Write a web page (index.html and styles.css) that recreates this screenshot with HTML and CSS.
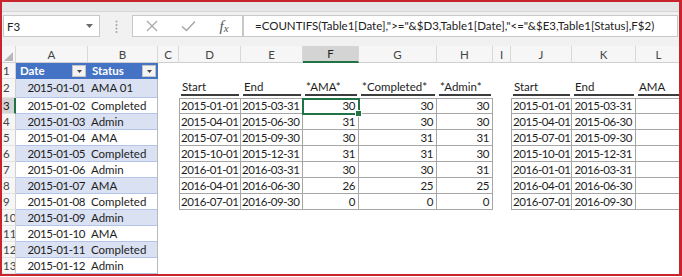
FILE: index.html
```html
<!DOCTYPE html>
<html lang="en">
<head>
    <meta charset="UTF-8">
    <meta name="viewport" content="width=device-width, initial-scale=1.0">
    <title>Countifs</title>
    <link rel="stylesheet" href="styles.css">
</head>
<body>
    <div class="window">
        <div class="ribbon"></div>
        <div class="formulaBar">
            <div class="nameBox">
                <span>F3</span>
                <svg width="7" height="4" viewBox="0 0 7 4"><polygon points="0,0 7,0 3.5,4" fill="#6b6b6b"/></svg>
            </div>
            <div class="grip">
                <svg width="3" height="14" viewBox="0 0 3 14">
                    <circle cx="1.5" cy="1.5" r="1" fill="#a3a3a3"/>
                    <circle cx="1.5" cy="5" r="1" fill="#a3a3a3"/>
                    <circle cx="1.5" cy="8.5" r="1" fill="#a3a3a3"/>
                    <circle cx="1.5" cy="12" r="1" fill="#a3a3a3"/>
                </svg>
            </div>
            <div class="fxBtns">
                <span class="fxBtn">
                    <svg width="12" height="12" viewBox="0 0 12 12"><path d="M1 1 L11 11 M11 1 L1 11" stroke="#a9a9a9" stroke-width="1.3" fill="none"/></svg>
                </span>
                <span class="fxBtn">
                    <svg width="15" height="12" viewBox="0 0 15 12"><path d="M1 6.5 L5.5 10.5 L14 1.5" stroke="#a9a9a9" stroke-width="1.6" fill="none"/></svg>
                </span>
                <span class="fxBtn fx">f<span class="fxSub">x</span></span>
            </div>
            <div class="formula">=COUNTIFS(Table1[Date],"&gt;="&amp;$D3,Table1[Date],"&lt;="&amp;$E3,Table1[Status],F$2)</div>
        </div>

        <table class="sheet">
            <colgroup>
                <col class="wRh"><col class="wA"><col class="wB"><col class="wC"><col class="wD"><col class="wE"><col class="wF">
                <col class="wG"><col class="wH"><col class="wI"><col class="wJ"><col class="wK"><col class="wL">
            </colgroup>
            <tr class="colHead">
                <th class="corner"><svg width="9" height="9" viewBox="0 0 9 9"><polygon points="9,0 9,9 0,9" fill="#b8b8b8"/></svg></th>
                <th>A</th><th>B</th><th>C</th><th>D</th><th>E</th><th class="active">F</th>
                <th>G</th><th>H</th><th>I</th><th>J</th><th>K</th><th>L</th>
            </tr>
            <tr class="rowOne">
                <td class="rh">1</td>
                <td class="tHead"><div class="hd">Date<span class="flt"><svg width="5" height="3" viewBox="0 0 5 3"><polygon points="0,0 5,0 2.5,3" fill="#444"/></svg></span></div></td>
                <td class="tHead"><div class="hd">Status<span class="flt"><svg width="5" height="3" viewBox="0 0 5 3"><polygon points="0,0 5,0 2.5,3" fill="#444"/></svg></span></div></td>
                <td colspan="10"></td>
            </tr>
            <tr class="rowTwo">
                <td class="rh">2</td>
                <td class="a band">2015-01-01</td><td class="b band">AMA 01</td>
                <td></td>
                <td class="h"><span>Start</span></td><td class="h"><span>End</span></td><td class="h"><span>*AMA*</span></td>
                <td class="h"><span>*Completed*</span></td><td class="h"><span>*Admin*</span></td>
                <td></td>
                <td class="h"><span>Start</span></td><td class="h"><span>End</span></td><td class="h"><span>AMA</span></td>
            </tr>
            <tr class="row">
                <td class="rh active">3</td>
                <td class="a">2015-01-02</td><td class="b">Completed</td>
                <td></td>
                <td class="n first top">2015-01-01</td><td class="n top">2015-03-31</td><td class="n top sel">30</td><td class="n top">30</td><td class="n top">30</td>
                <td></td>
                <td class="n first top">2015-01-01</td><td class="n top">2015-03-31</td><td class="n top"></td>
            </tr>
            <tr class="row">
                <td class="rh">4</td>
                <td class="a band">2015-01-03</td><td class="b band">Admin</td>
                <td></td>
                <td class="n first">2015-04-01</td><td class="n">2015-06-30</td><td class="n">31</td><td class="n">30</td><td class="n">30</td>
                <td></td>
                <td class="n first">2015-04-01</td><td class="n">2015-06-30</td><td class="n"></td>
            </tr>
            <tr class="row">
                <td class="rh">5</td>
                <td class="a">2015-01-04</td><td class="b">AMA</td>
                <td></td>
                <td class="n first">2015-07-01</td><td class="n">2015-09-30</td><td class="n">30</td><td class="n">31</td><td class="n">31</td>
                <td></td>
                <td class="n first">2015-07-01</td><td class="n">2015-09-30</td><td class="n"></td>
            </tr>
            <tr class="row">
                <td class="rh">6</td>
                <td class="a band">2015-01-05</td><td class="b band">Completed</td>
                <td></td>
                <td class="n first">2015-10-01</td><td class="n">2015-12-31</td><td class="n">31</td><td class="n">31</td><td class="n">30</td>
                <td></td>
                <td class="n first">2015-10-01</td><td class="n">2015-12-31</td><td class="n"></td>
            </tr>
            <tr class="row">
                <td class="rh">7</td>
                <td class="a">2015-01-06</td><td class="b">Admin</td>
                <td></td>
                <td class="n first">2016-01-01</td><td class="n">2016-03-31</td><td class="n">30</td><td class="n">30</td><td class="n">31</td>
                <td></td>
                <td class="n first">2016-01-01</td><td class="n">2016-03-31</td><td class="n"></td>
            </tr>
            <tr class="row">
                <td class="rh">8</td>
                <td class="a band">2015-01-07</td><td class="b band">AMA</td>
                <td></td>
                <td class="n first">2016-04-01</td><td class="n">2016-06-30</td><td class="n">26</td><td class="n">25</td><td class="n">25</td>
                <td></td>
                <td class="n first">2016-04-01</td><td class="n">2016-06-30</td><td class="n"></td>
            </tr>
            <tr class="row">
                <td class="rh">9</td>
                <td class="a">2015-01-08</td><td class="b">Completed</td>
                <td></td>
                <td class="n first">2016-07-01</td><td class="n">2016-09-30</td><td class="n">0</td><td class="n">0</td><td class="n">0</td>
                <td></td>
                <td class="n first">2016-07-01</td><td class="n">2016-09-30</td><td class="n"></td>
            </tr>
            <tr class="row">
                <td class="rh">10</td>
                <td class="a band">2015-01-09</td><td class="b band">Admin</td>
                <td colspan="10"></td>
            </tr>
            <tr class="row">
                <td class="rh">11</td>
                <td class="a">2015-01-10</td><td class="b">AMA</td>
                <td colspan="10"></td>
            </tr>
            <tr class="row">
                <td class="rh">12</td>
                <td class="a band">2015-01-11</td><td class="b band">Completed</td>
                <td colspan="10"></td>
            </tr>
            <tr class="row">
                <td class="rh">13</td>
                <td class="a">2015-01-12</td><td class="b">Admin</td>
                <td colspan="10"></td>
            </tr>
        </table>

        <div class="frame"></div>
    </div>
</body>
</html>
```

FILE: styles.css
```css
* {
    margin: 0;
    padding: 0;
    box-sizing: border-box;
}
body {
    width: 682px;
    height: 277px;
    overflow: hidden;
    background: #fff;
    font-family: Lato, "Liberation Sans", sans-serif;
}
.window {
    position: relative;
    width: 682px;
    height: 277px;
    overflow: hidden;
}
.frame {
    position: absolute;
    left: 0;
    top: 0;
    width: 682px;
    height: 276px;
    border: 2px solid #c9242b;
    border-right-width: 3px;
    pointer-events: none;
}

/* formula bar */
.ribbon {
    height: 12px;
    background: #e6e6e6;
    border-bottom: 1px solid #d6d6d6;
}
.formulaBar {
    display: flex;
    align-items: flex-start;
    height: 34px;
    padding-top: 3px;
    background: #f1f1f1;
}
.nameBox {
    display: flex;
    align-items: center;
    justify-content: space-between;
    margin-left: 3px;
    width: 97px;
    height: 22px;
    padding: 0 6px 0 3px;
    background: #fff;
    border: 1px solid #c8c8c8;
    font-size: 11.5px;
    color: #222;
}
.grip {
    display: flex;
    justify-content: center;
    width: 32px;
    padding-top: 5px;
}
.fxBtns {
    display: flex;
    align-items: center;
    width: 111px;
    height: 22px;
    padding-left: 1px;
    background: #fff;
    border: 1px solid #c8c8c8;
}
.fxBtn {
    display: flex;
    justify-content: center;
    align-items: center;
    width: 36px;
}
.fx {
    font-family: "Liberation Serif", serif;
    font-style: italic;
    font-size: 15px;
    color: #555;
}
.fxSub {
    font-size: 11px;
    margin-top: 4px;
}
.formula {
    flex: 1;
    margin-right: 4px;
    height: 22px;
    padding-left: 11px;
    background: #fff;
    border: 1px solid #c8c8c8;
    font-size: 11.5px;
    line-height: 20px;
    color: #222;
    white-space: nowrap;
    overflow: hidden;
}

/* sheet */
.sheet {
    width: 682px;
    table-layout: fixed;
    border-spacing: 0;
    font-size: 11.5px;
    color: #1d1d1d;
}
.wRh { width: 16px; }
.wA { width: 72px; }
.wB { width: 70px; }
.wC { width: 21px; }
.wD { width: 62px; }
.wE { width: 62px; }
.wF { width: 56px; }
.wG { width: 78px; }
.wH { width: 56px; }
.wI { width: 18px; }
.wJ { width: 61px; }
.wK { width: 64px; }
.wL { width: 46px; }

.sheet td {
    padding: 0 3px;
    line-height: 14px;
    white-space: nowrap;
    overflow: hidden;
    vertical-align: middle;
}
.colHead {
    height: 17px;
}
.colHead th {
    font-weight: normal;
    font-size: 11.5px;
    color: #444;
    background: #f6f6f6;
    border-right: 1px solid #d8d8d8;
    border-bottom: 1px solid #cfcfcf;
    text-align: center;
}
.colHead th.active {
    background: #d4d4d4;
    color: #222;
    border-bottom: 2px solid #217346;
}
.corner {
    text-align: right !important;
    vertical-align: bottom;
    padding: 0 2px 1px 0;
}
.corner svg {
    display: block;
    margin-left: auto;
}
.rowOne {
    height: 16px;
}
.rowTwo {
    height: 19px;
}
.row {
    height: 16px;
}
.sheet td.rh {
    padding: 0 0 0 3px;
    background: #f6f6f6;
    color: #444;
    border-right: 1px solid #cfcfcf;
    border-bottom: 1px solid #e2e2e2;
}
.sheet td.rh.active {
    background: #d4d4d4;
    color: #222;
    border-right: 2px solid #217346;
}

/* table1 */
.tHead {
    background: #4472c4;
    color: #fff;
    font-weight: bold;
}
.sheet td.tHead {
    padding: 0 2px 0 4px;
}
.hd {
    display: flex;
    justify-content: space-between;
    align-items: center;
}
.flt {
    display: flex;
    justify-content: center;
    align-items: center;
    width: 14px;
    height: 12px;
    background: #f3f3f3;
    border: 1px solid #c4c4c4;
}
.a, .b {
    border-bottom: 1px solid #b4c6e7;
}
.a {
    text-align: right;
    letter-spacing: -0.45px;
}
.b {
    border-right: 1px solid #b9b9b9;
}
.band {
    background: #d9e1f2;
}

/* quarter tables */
.sheet td.h {
    padding: 0 2px 2px;
    vertical-align: bottom;
}
.h span {
    display: block;
    padding-left: 1px;
    border-bottom: 2px solid #3c3c3c;
}
.n {
    text-align: right;
    letter-spacing: -0.45px;
    border-right: 1px solid #a6a6a6;
    border-bottom: 1px solid #a6a6a6;
}
.sheet td.n {
    padding: 0 3px 0 1px;
}
.n.first {
    border-left: 1px solid #a6a6a6;
}
.n.top {
    border-top: 1px solid #a6a6a6;
}
.sel {
    position: relative;
    overflow: visible !important;
}
.sel::before {
    content: "";
    position: absolute;
    left: -1px;
    top: -1px;
    right: -2px;
    bottom: -2px;
    border: 2px solid #217346;
}
.sel::after {
    content: "";
    position: absolute;
    right: -4px;
    bottom: -4px;
    width: 5px;
    height: 5px;
    background: #217346;
    border: 1px solid #fff;
}
```
